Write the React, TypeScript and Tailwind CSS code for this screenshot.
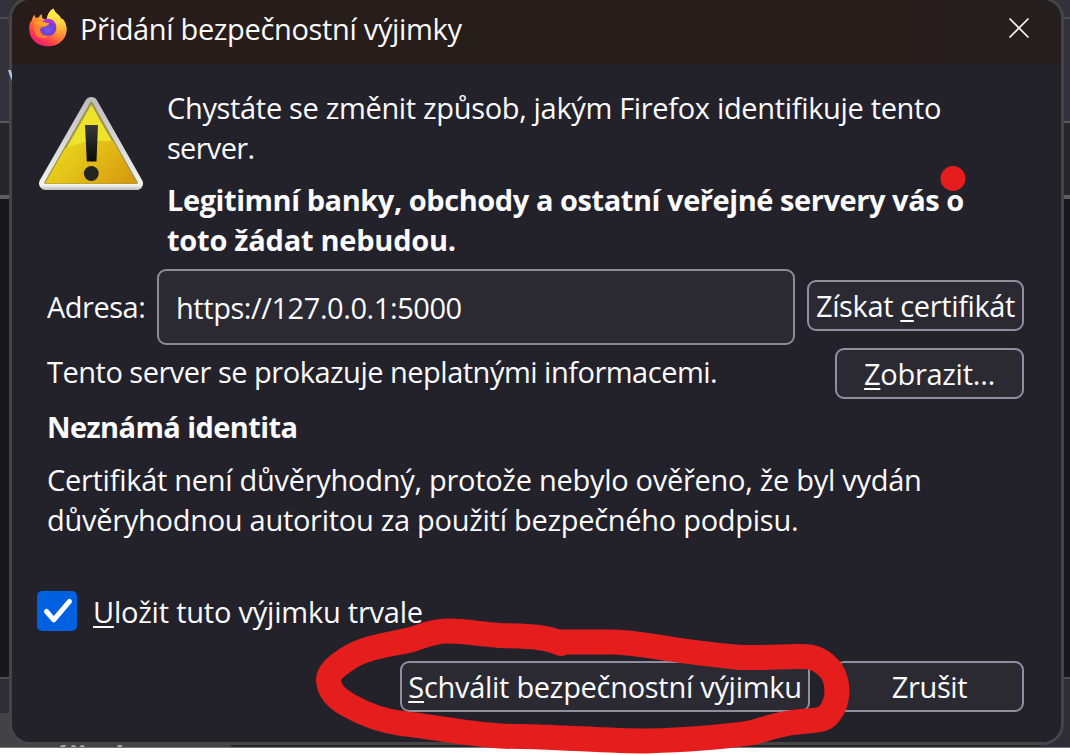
import type { ReactNode } from "react";

function FirefoxLogo() {
  return (
    <svg className="h-10 w-10 shrink-0" viewBox="0 0 40 40" fill="none">
      <defs>
        <linearGradient id="fxBody" x1="32" y1="6" x2="11" y2="37" gradientUnits="userSpaceOnUse">
          <stop offset="0" stopColor="#fff04a" />
          <stop offset="0.3" stopColor="#ffb52e" />
          <stop offset="0.55" stopColor="#ff7a36" />
          <stop offset="0.8" stopColor="#ff3a4e" />
          <stop offset="1" stopColor="#ee1a76" />
        </linearGradient>
        <linearGradient id="fxTail" x1="26" y1="0" x2="30" y2="36" gradientUnits="userSpaceOnUse">
          <stop offset="0" stopColor="#fff04f" />
          <stop offset="0.4" stopColor="#ffd93f" />
          <stop offset="0.7" stopColor="#ffa035" stopOpacity="0.85" />
          <stop offset="1" stopColor="#ff4a45" stopOpacity="0" />
        </linearGradient>
        <radialGradient id="fxGlobe" cx="20" cy="22" r="10" gradientUnits="userSpaceOnUse">
          <stop offset="0" stopColor="#6b57e8" />
          <stop offset="0.6" stopColor="#6f40d4" />
          <stop offset="1" stopColor="#9530d4" />
        </radialGradient>
      </defs>
      <path
        d="M6.300 6.500c.4 1.700 1 2.700 1.800 3.500 1-.5 1.900-.7 2.900-.8.5-1.300 1.300-2.300 2.800-3.100-.1 2 .1 3.400 1.300 4.700 1.500.3 2.500.2 3.700 0C19.200 6.800 21.600 2.700 25.400.4c.8 2.700 2.400 4.300 4.600 6 1.400 1.200 2.300 2.300 2.900 4l2.200 1c2.600 3.500 3.600 6.800 3.400 10.800C38 31.600 30.400 38.300 20 38.300 9.200 38.300 1.200 31 1.200 21c0-3.300.5-5.800 1.700-8.300l.5 1.300c.4-3 1.500-5.400 2.900-7.500Z"
        fill="url(#fxBody)"
      />
      <circle cx="20" cy="19.800" r="8.300" fill="url(#fxGlobe)" />
      <path d="M15 12.500c2.500-2 7.500-2.500 11 .4 2.200 1.700 3 4.100 2.500 6.100-1.300-2.400-3.500-3.600-6-4-2.800-.4-5-.5-7.500-2.500Z" fill="#ae34dc" />
      <path
        d="M25.400.4c.8 2.700 2.400 4.300 4.600 6 1.400 1.200 2.300 2.300 2.900 4l2.200 1c2.600 3.500 3.600 6.800 3.400 10.800-.3 6.800-4.400 11.900-10 14.400 2.600-2.600 3.500-4.600 3-7.600-2.500 2.300-5 3.200-7.500 2.800 3.500-2 4.600-5 4.900-8.600.4-4.700-1.100-8.900-4.300-11.100-1.700-1.200-3.400-1.500-5.500-1.400C19.200 6.800 21.600 2.700 25.400.4Z"
        fill="url(#fxTail)"
      />
      <path
        d="M6 14.300c3-1.600 6.200-1.600 8.500-.6 2 .9 4.200 1.300 6.700 1.500-.6 1.800-2.600 2.600-4.800 3.200-2.800.7-4.700 2-4.600 4.600.9 3.700 4.900 5.600 9.200 4.700-2.900 2.900-8.200 3.300-11.600.8C6.600 26 5.600 20 6 14.300Z"
        fill="#ff7d2e"
      />
      <path d="M6 14.800c2.500-2.300 6-2.300 8.500-1.100 2 .9 4.200 1.300 6.700 1.500-.6 1.800-2.600 2.600-4.800 3.200-3 .2-6.400-1.400-10.400-3.600Z" fill="#ffa22c" />
    </svg>
  );
}

function WarningIcon() {
  return (
    <svg className="h-24 w-[106px] shrink-0" viewBox="0 0 106 96" fill="none">
      <defs>
        <linearGradient id="warnRim" x1="53" y1="0" x2="53" y2="96" gradientUnits="userSpaceOnUse">
          <stop offset="0" stopColor="#bdbdbd" />
          <stop offset="0.6" stopColor="#dedede" />
          <stop offset="0.93" stopColor="#f2f2ee" />
          <stop offset="1" stopColor="#a2a2a2" />
        </linearGradient>
        <linearGradient id="warnFace" x1="40" y1="8" x2="62" y2="90" gradientUnits="userSpaceOnUse">
          <stop offset="0" stopColor="#ebe22a" />
          <stop offset="1" stopColor="#f2e62c" />
        </linearGradient>
        <linearGradient id="warnShade" x1="30" y1="48" x2="80" y2="96" gradientUnits="userSpaceOnUse">
          <stop offset="0" stopColor="#e8d31b" />
          <stop offset="1" stopColor="#d99b10" />
        </linearGradient>
        <linearGradient id="warnMark" x1="53" y1="28" x2="53" y2="64" gradientUnits="userSpaceOnUse">
          <stop offset="0" stopColor="#3a3a38" />
          <stop offset="1" stopColor="#0c0c0c" />
        </linearGradient>
        <clipPath id="warnClip">
          <path d="M53.300 6.500 99 87.500H7Z" />
        </clipPath>
      </defs>
      <path d="M53.300 7.500 98.500 87.500H7.500Z" stroke="url(#warnRim)" strokeWidth="13" strokeLinejoin="round" />
      <path d="M53.300 6.500 98.800 86.800H7.200Z" fill="url(#warnFace)" stroke="#9d954c" strokeWidth="2.200" strokeLinejoin="round" />
      <path clipPath="url(#warnClip)" d="M0 70C24 48 52 42 84 46L106 90H0Z" fill="url(#warnShade)" />
      <path d="M47 29h13l-1.500 36.500h-9.700Z" fill="url(#warnMark)" />
      <circle cx="53.300" cy="77.500" r="7.400" fill="#242421" />
    </svg>
  );
}

function Button({ className, children }: { className: string; children: ReactNode }) {
  return (
    <button
      className={`flex h-[51px] shrink-0 items-center justify-center rounded-[9px] border-2 border-[#8f8f9d] bg-[#2b2a33] leading-10 ${className}`}
    >
      {children}
    </button>
  );
}

function Key({ children }: { children: ReactNode }) {
  return <span className="underline decoration-2 underline-offset-[3px] [text-decoration-skip-ink:none]">{children}</span>;
}

function Backdrop() {
  return (
    <div className="absolute inset-x-0 top-0 flex h-[748px] flex-col overflow-hidden bg-[#17161b]">
      <div className="h-[17px] bg-[#33323c]" />
      <div className="h-[2px] bg-[#4b4b52]" />
      <div className="h-[102px] bg-[#33323c]" />
      <div className="h-[2px] bg-[#5a5a5d]" />
      <div className="h-[72px] bg-[#262628]" />
      <div className="h-[4px] bg-[#5d5d5f]" />
      <div className="h-[478px] bg-[#17161b]" />
      <div className="h-[2px] bg-[#4b4b50]" />
      <div className="h-[34px] bg-[#2f2e35]" />
      <div className="flex h-[35px]">
        <div className="w-[231px] overflow-hidden border-b border-[#77777a] bg-[#434246] pl-[36px] text-[29px] leading-[40px] font-bold text-[#a8a8aa]">
          <div className="mt-[23px]">výjimku</div>
        </div>
        <div className="flex-1 border-b border-[#77777a] bg-[#262628]" />
        <div className="w-[30px] border-b border-[#77777a] bg-[#2f2e35]" />
      </div>
    </div>
  );
}

function Marker() {
  return (
    <svg className="pointer-events-none absolute inset-0 h-[755px] w-[1070px]" viewBox="0 0 1070 755" fill="none">
      <circle cx="953" cy="178.500" r="12.500" fill="#e61d1d" />
      <path
        d="M561 643.500C545 636 525 636.500 500 635.500C480 634 465 631 448 631C430 631 422 637 410 640C388 645 365 647 347 659C335 667 328.500 673 328.500 680C329 691 336 698 349 705.500C364 714 382 721 402 723.500C435 727 465 734 500 736C515 737 525 736 540 737C575 738 610 741 647 741C682 740 715 738 750 733C765 730 775 724 797 722C812 720 823 722 829 714C836 706 837 695 837 690C836 674 830 668 822 662C813 656 806 656.500 796 656.500C775 657 755 658 740 657.500C715 655 690 652 670 649C650 646 630 642 610 642L561 642"
        stroke="#e61d1d"
        strokeWidth="25"
        strokeLinecap="round"
        strokeLinejoin="round"
      />
    </svg>
  );
}

export default function App() {
  return (
    <div className="relative h-[755px] w-[1070px] overflow-hidden bg-white font-['Open_Sans','Noto_Sans',sans-serif] text-[29px] leading-10 whitespace-nowrap text-[#fbfbfe]">
      <Backdrop />
      <section className="relative mt-[-3px] ml-[9px] flex h-[748px] w-[1055px] flex-col overflow-hidden rounded-[21px] border-[3px] border-[#454548] bg-[#23222b]">
        <header className="flex h-16 shrink-0 items-center bg-[linear-gradient(90deg,#271c19_0%,#271e1c_85%,#241f1e_100%)] pr-[31px] pl-4">
          <div className="-mt-[9px]"><FirefoxLogo /></div>
          <h1 className="-mt-1.5 ml-3 flex-1 tracking-[-0.33px]">Přidání bezpečnostní výjimky</h1>
          <svg className="-mt-2 h-[22px] w-[22px]" viewBox="0 0 22 22" stroke="#f5f3f3" strokeWidth="1.700">
            <path d="M1.500 1.500 20.500 20.500M20.500 1.500 1.500 20.500" />
          </svg>
        </header>
        <main className="flex flex-col">
          <div className="flex pt-6 pl-[26px]">
            <div className="mt-2"><WarningIcon /></div>
            <div className="ml-[23px]">
              <p className="tracking-[-0.33px]">Chystáte se změnit způsob, jakým Firefox identifikuje tento<br /><span className="tracking-[-0.7px]">server.</span></p>
              <p className="mt-3 font-bold tracking-[-0.44px]">Legitimní banky, obchody a ostatní veřejné servery vás o<br /><span className="tracking-[-0.25px]">toto žádat nebudou.</span></p>
            </div>
          </div>
          <div className="mt-[9px] flex h-[76px] pl-[35px]">
            <label className="mt-[18px] w-[110px] tracking-[-0.5px]">Adresa:</label>
            <div className="flex w-[638px] items-center rounded-[9px] border-2 border-[#8c8c90] bg-[#2b2a33] pt-0.5 pl-[17px] tracking-[-0.43px]">https://127.0.0.1:5000</div>
            <Button className="mt-[11px] ml-3 w-[217px] tracking-[-0.37px]"><span>Získat <Key>c</Key>ertifikát</span></Button>
          </div>
          <div className="mt-[3px] flex h-[51px] pl-[35px]">
            <p className="mt-1 w-[788px] tracking-[-0.5px]">Tento server se prokazuje neplatnými informacemi.</p>
            <Button className="w-[189px] tracking-[-0.3px]"><span><Key>Z</Key>obrazit…</span></Button>
          </div>
          <h2 className="mt-2 pl-[35px] font-bold tracking-[-0.6px]">Neznámá identita</h2>
          <p className="mt-[13px] pl-[35px] tracking-[-0.28px]">Certifikát není důvěryhodný, protože nebylo ověřeno, že byl vydán<br />důvěryhodnou autoritou za použití bezpečného podpisu.</p>
          <label className="mt-[51px] flex pl-[25px]">
            <span className="flex h-10 w-10 items-center justify-center rounded-[5px] bg-[#0061e0]">
              <svg className="h-10 w-10" viewBox="0 0 40 40" fill="none">
                <path d="M9.500 20.500 16.800 28.800 32.500 10.300" stroke="white" strokeWidth="5" strokeLinecap="round" strokeLinejoin="round" />
              </svg>
            </span>
            <span className="mt-px ml-4 tracking-[-0.22px]"><Key>U</Key>ložit tuto výjimku trvale</span>
          </label>
          <div className="mt-[29px] flex gap-[25px] pl-[388px]">
            <Button className="w-[410px] tracking-[-0.29px]"><span><Key>S</Key>chválit bezpečnostní výjimku</span></Button>
            <Button className="w-[189px] tracking-[-0.4px]">Zrušit</Button>
          </div>
        </main>
      </section>
      <div className="absolute top-[70px] left-2 h-[11px] w-1 overflow-hidden leading-[40px] text-[#b9cbd8]">
        <div className="-mt-[15px]">v</div>
      </div>
      <Marker />
    </div>
  );
}
